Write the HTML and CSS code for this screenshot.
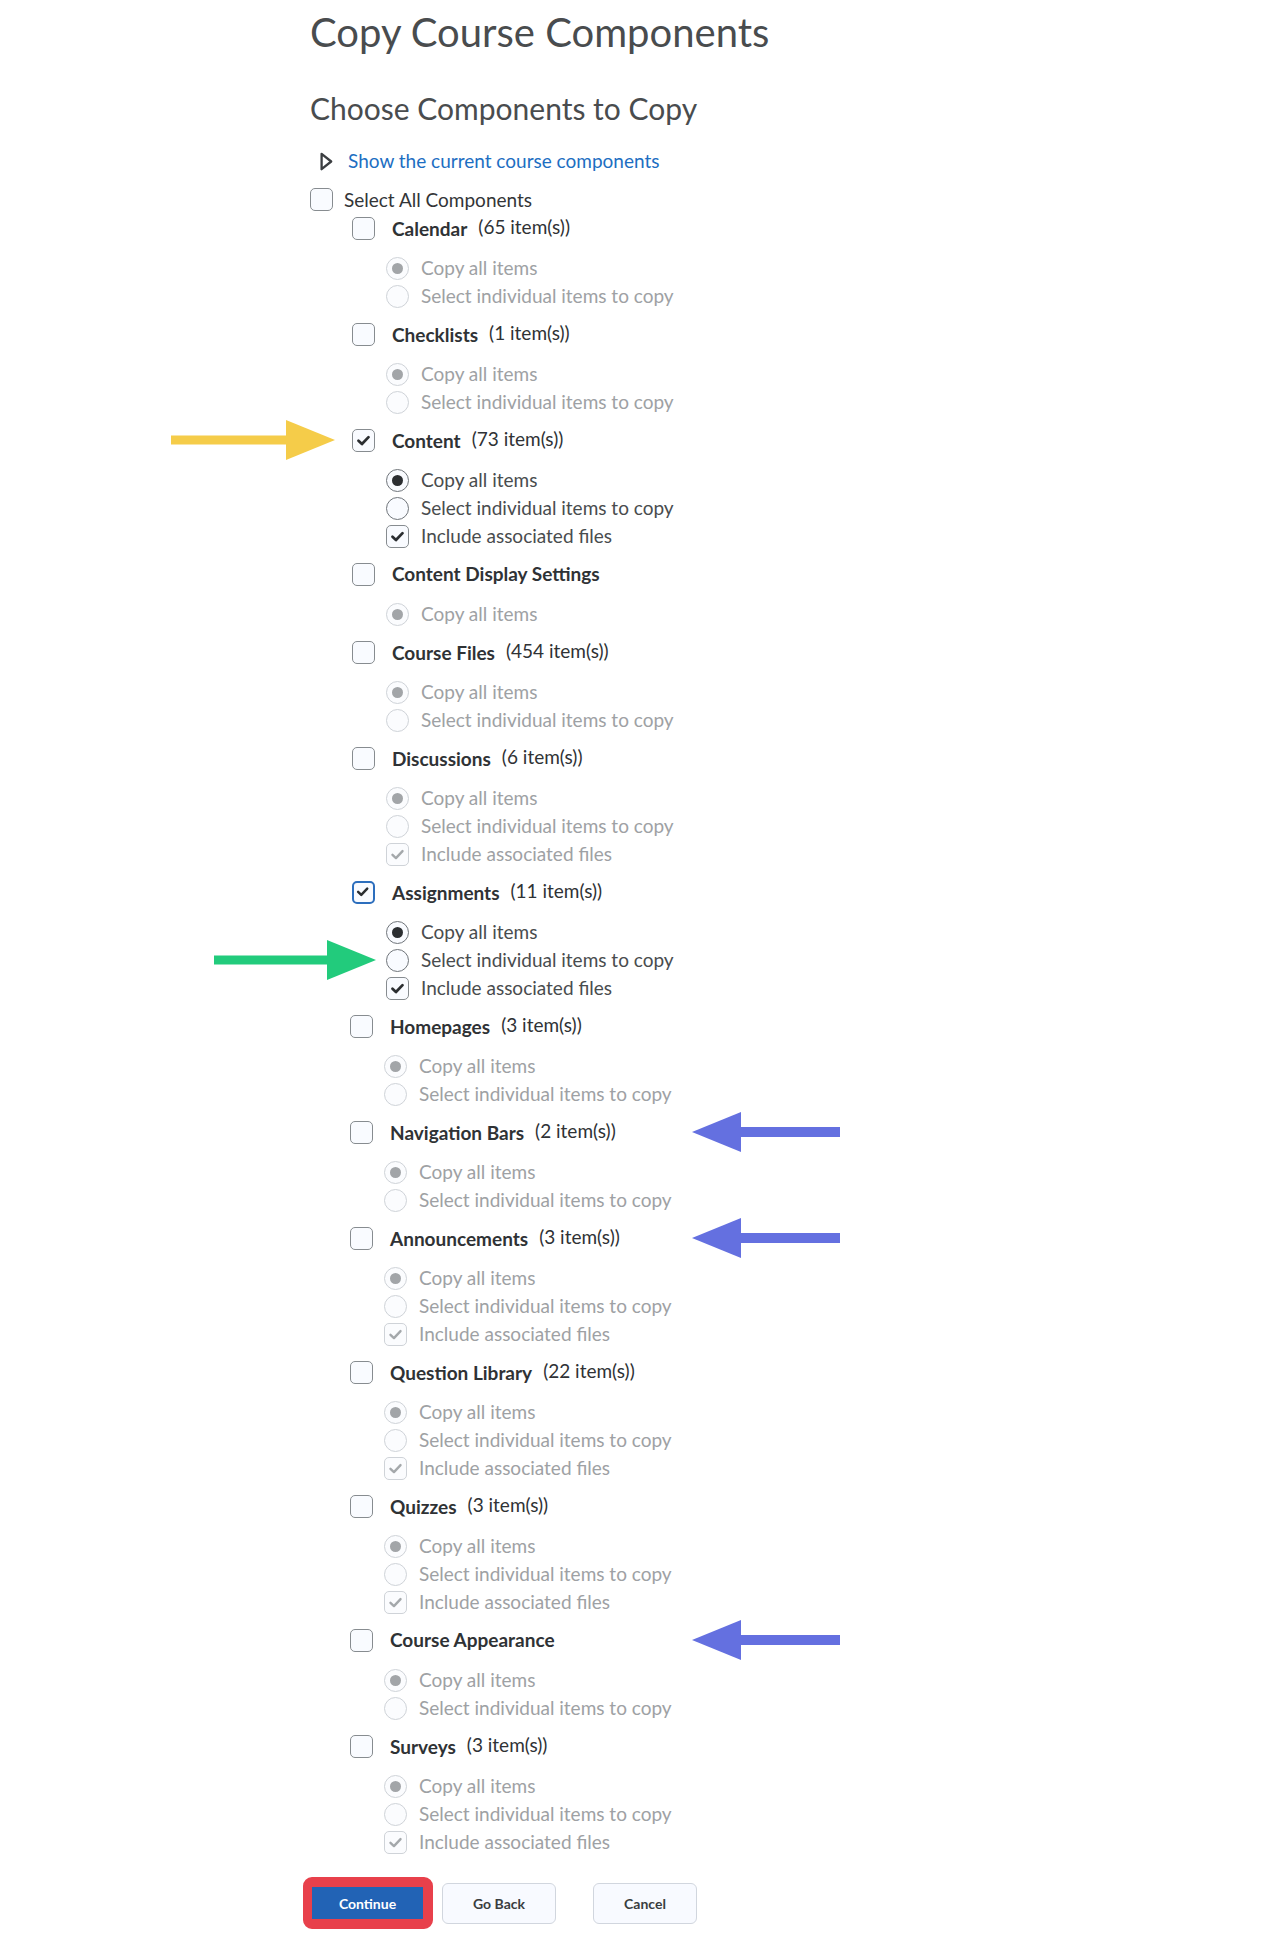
FILE: index.html
```html
<!DOCTYPE html>
<html lang="en">
<head>
<meta charset="utf-8">
<title>Copy Course Components</title>
<link rel="stylesheet" href="styles.css">
</head>
<body>
<main class="page">
  <h1 class="title">Copy Course Components</h1>
  <h2 class="subtitle">Choose Components to Copy</h2>

  <div class="toggle">
    <svg class="tri" width="13" height="19" viewBox="0 0 13 19"><path d="M1.6 1.8 L11.2 9.5 L1.6 17.2 Z" fill="none" stroke="#3b3e41" stroke-width="2.3" stroke-linejoin="round"/></svg>
    <a class="link" href="#">Show the current course components</a>
  </div>

  <label class="select-all"><span class="cb"></span><span>Select All Components</span></label>

  <ul class="components">
    <li class="comp">
      <div class="head"><span class="cb"></span><span class="lbl"><b class="name">Calendar</b><span class="count">(65 item(s))</span></span></div>
      <ul class="opts off">
        <li class="opt"><span class="radio on"></span>Copy all items</li>
        <li class="opt"><span class="radio"></span>Select individual items to copy</li>
      </ul>
    </li>
    <li class="comp">
      <div class="head"><span class="cb"></span><span class="lbl"><b class="name">Checklists</b><span class="count">(1 item(s))</span></span></div>
      <ul class="opts off">
        <li class="opt"><span class="radio on"></span>Copy all items</li>
        <li class="opt"><span class="radio"></span>Select individual items to copy</li>
      </ul>
    </li>
    <li class="comp">
      <div class="head">
        <svg class="arrow arrow-yellow" width="164" height="40" viewBox="0 0 164 40"><rect x="0" y="15.5" width="118" height="9" fill="#f5cc49"/><polygon points="115,0 164,20 115,40" fill="#f5cc49"/></svg>
        <span class="cb checked"><svg viewBox="0 0 23 23"><path d="M6 11.8 L9.8 15.4 L17 7.8" fill="none" stroke="#2b2e31" stroke-width="3" stroke-linecap="round" stroke-linejoin="round"/></svg></span><span class="lbl"><b class="name">Content</b><span class="count">(73 item(s))</span></span></div>
      <ul class="opts">
        <li class="opt"><span class="radio on"></span>Copy all items</li>
        <li class="opt"><span class="radio"></span>Select individual items to copy</li>
        <li class="opt"><span class="cb checked"><svg viewBox="0 0 23 23"><path d="M6 11.8 L9.8 15.4 L17 7.8" fill="none" stroke="#2b2e31" stroke-width="3" stroke-linecap="round" stroke-linejoin="round"/></svg></span>Include associated files</li>
      </ul>
    </li>
    <li class="comp">
      <div class="head"><span class="cb"></span><span class="lbl"><b class="name">Content Display Settings</b></span></div>
      <ul class="opts off">
        <li class="opt"><span class="radio on"></span>Copy all items</li>
      </ul>
    </li>
    <li class="comp">
      <div class="head"><span class="cb"></span><span class="lbl"><b class="name">Course Files</b><span class="count">(454 item(s))</span></span></div>
      <ul class="opts off">
        <li class="opt"><span class="radio on"></span>Copy all items</li>
        <li class="opt"><span class="radio"></span>Select individual items to copy</li>
      </ul>
    </li>
    <li class="comp">
      <div class="head"><span class="cb"></span><span class="lbl"><b class="name">Discussions</b><span class="count">(6 item(s))</span></span></div>
      <ul class="opts off">
        <li class="opt"><span class="radio on"></span>Copy all items</li>
        <li class="opt"><span class="radio"></span>Select individual items to copy</li>
        <li class="opt"><span class="cb checked"><svg viewBox="0 0 23 23"><path d="M6 11.8 L9.8 15.4 L17 7.8" fill="none" stroke="#a4a8ab" stroke-width="2.6" stroke-linecap="round" stroke-linejoin="round"/></svg></span>Include associated files</li>
      </ul>
    </li>
    <li class="comp">
      <div class="head"><span class="cb checked focus"><svg viewBox="0 0 23 23"><path d="M5 10.8 L8.8 14.4 L16 6.8" fill="none" stroke="#2b2e31" stroke-width="3" stroke-linecap="round" stroke-linejoin="round"/></svg></span><span class="lbl"><b class="name">Assignments</b><span class="count">(11 item(s))</span></span></div>
      <ul class="opts">
        <li class="opt"><span class="radio on"></span>Copy all items</li>
        <li class="opt">
          <svg class="arrow arrow-green" width="162" height="40" viewBox="0 0 162 40"><rect x="0" y="15.5" width="116" height="9" fill="#22cb7c"/><polygon points="113,0 162,20 113,40" fill="#22cb7c"/></svg>
          <span class="radio"></span>Select individual items to copy</li>
        <li class="opt"><span class="cb checked"><svg viewBox="0 0 23 23"><path d="M6 11.8 L9.8 15.4 L17 7.8" fill="none" stroke="#2b2e31" stroke-width="3" stroke-linecap="round" stroke-linejoin="round"/></svg></span>Include associated files</li>
      </ul>
    </li>
    <li class="comp shift">
      <div class="head"><span class="cb"></span><span class="lbl"><b class="name">Homepages</b><span class="count">(3 item(s))</span></span></div>
      <ul class="opts off">
        <li class="opt"><span class="radio on"></span>Copy all items</li>
        <li class="opt"><span class="radio"></span>Select individual items to copy</li>
      </ul>
    </li>
    <li class="comp shift">
      <div class="head">
        <svg class="arrow arrow-blue" width="148" height="40" viewBox="0 0 148 40"><polygon points="0,20 49,0 49,40" fill="#6470e0"/><rect x="47" y="15" width="101" height="10" fill="#6470e0"/></svg>
        <span class="cb"></span><span class="lbl"><b class="name">Navigation Bars</b><span class="count">(2 item(s))</span></span></div>
      <ul class="opts off">
        <li class="opt"><span class="radio on"></span>Copy all items</li>
        <li class="opt"><span class="radio"></span>Select individual items to copy</li>
      </ul>
    </li>
    <li class="comp shift">
      <div class="head">
        <svg class="arrow arrow-blue" width="148" height="40" viewBox="0 0 148 40"><polygon points="0,20 49,0 49,40" fill="#6470e0"/><rect x="47" y="15" width="101" height="10" fill="#6470e0"/></svg>
        <span class="cb"></span><span class="lbl"><b class="name">Announcements</b><span class="count">(3 item(s))</span></span></div>
      <ul class="opts off">
        <li class="opt"><span class="radio on"></span>Copy all items</li>
        <li class="opt"><span class="radio"></span>Select individual items to copy</li>
        <li class="opt"><span class="cb checked"><svg viewBox="0 0 23 23"><path d="M6 11.8 L9.8 15.4 L17 7.8" fill="none" stroke="#a4a8ab" stroke-width="2.6" stroke-linecap="round" stroke-linejoin="round"/></svg></span>Include associated files</li>
      </ul>
    </li>
    <li class="comp shift">
      <div class="head"><span class="cb"></span><span class="lbl"><b class="name">Question Library</b><span class="count">(22 item(s))</span></span></div>
      <ul class="opts off">
        <li class="opt"><span class="radio on"></span>Copy all items</li>
        <li class="opt"><span class="radio"></span>Select individual items to copy</li>
        <li class="opt"><span class="cb checked"><svg viewBox="0 0 23 23"><path d="M6 11.8 L9.8 15.4 L17 7.8" fill="none" stroke="#a4a8ab" stroke-width="2.6" stroke-linecap="round" stroke-linejoin="round"/></svg></span>Include associated files</li>
      </ul>
    </li>
    <li class="comp shift">
      <div class="head"><span class="cb"></span><span class="lbl"><b class="name">Quizzes</b><span class="count">(3 item(s))</span></span></div>
      <ul class="opts off">
        <li class="opt"><span class="radio on"></span>Copy all items</li>
        <li class="opt"><span class="radio"></span>Select individual items to copy</li>
        <li class="opt"><span class="cb checked"><svg viewBox="0 0 23 23"><path d="M6 11.8 L9.8 15.4 L17 7.8" fill="none" stroke="#a4a8ab" stroke-width="2.6" stroke-linecap="round" stroke-linejoin="round"/></svg></span>Include associated files</li>
      </ul>
    </li>
    <li class="comp shift">
      <div class="head">
        <svg class="arrow arrow-blue" width="148" height="40" viewBox="0 0 148 40"><polygon points="0,20 49,0 49,40" fill="#6470e0"/><rect x="47" y="15" width="101" height="10" fill="#6470e0"/></svg>
        <span class="cb"></span><span class="lbl"><b class="name">Course Appearance</b></span></div>
      <ul class="opts off">
        <li class="opt"><span class="radio on"></span>Copy all items</li>
        <li class="opt"><span class="radio"></span>Select individual items to copy</li>
      </ul>
    </li>
    <li class="comp shift">
      <div class="head"><span class="cb"></span><span class="lbl"><b class="name">Surveys</b><span class="count">(3 item(s))</span></span></div>
      <ul class="opts off">
        <li class="opt"><span class="radio on"></span>Copy all items</li>
        <li class="opt"><span class="radio"></span>Select individual items to copy</li>
        <li class="opt"><span class="cb checked"><svg viewBox="0 0 23 23"><path d="M6 11.8 L9.8 15.4 L17 7.8" fill="none" stroke="#a4a8ab" stroke-width="2.6" stroke-linecap="round" stroke-linejoin="round"/></svg></span>Include associated files</li>
      </ul>
    </li>
  </ul>

  <div class="buttons">
    <button class="btn btn-primary" type="button">Continue</button>
    <button class="btn btn-back" type="button">Go Back</button>
    <button class="btn btn-cancel" type="button">Cancel</button>
  </div>
</main>
</body>
</html>
```
FILE: styles.css
```css
* { box-sizing: border-box; }

html, body {
  margin: 0;
  padding: 0;
  background: #ffffff;
}

body {
  font-family: Lato, "Open Sans", "Liberation Sans", sans-serif;
  color: #494c4e;
}

.page {
  padding: 8px 0 0 310px;
}

.title {
  margin: 0;
  font-size: 40px;
  line-height: 48px;
  font-weight: 400;
  color: #494c4e;
}

.subtitle {
  margin: 34px 0 0;
  font-size: 30px;
  line-height: 36px;
  font-weight: 400;
  color: #494c4e;
}

.toggle {
  display: flex;
  align-items: center;
  height: 24px;
  margin-top: 23px;
  padding-left: 10px;
  gap: 15px;
}

.tri { display: block; }

.link {
  font-size: 19px;
  line-height: 24px;
  color: #1d6ec2;
  text-decoration: none;
}

.select-all {
  display: flex;
  align-items: center;
  gap: 11px;
  height: 23px;
  margin-top: 15px;
  font-size: 19px;
  line-height: 23px;
  color: #333537;
}

.cb {
  flex: none;
  display: inline-flex;
  align-items: center;
  justify-content: center;
  width: 23px;
  height: 23px;
  border: 1px solid #878c90;
  border-radius: 5px;
  background: #f9fbff;
}

.cb svg {
  width: 23px;
  height: 23px;
  display: block;
}

.cb.focus {
  border: 2px solid #2c6ebd;
}

.components {
  list-style: none;
  margin: 5px 0 0;
  padding: 0 0 0 42px;
}

.comp.shift {
  margin-left: -2px;
}

.head {
  position: relative;
  display: flex;
  align-items: center;
  height: 24px;
  gap: 17px;
}

.lbl {
  font-size: 19px;
  line-height: 24px;
  white-space: nowrap;
}

.name {
  font-weight: 700;
  color: #2f3235;
}

.count {
  margin-left: 11px;
  vertical-align: 2px;
  color: #2f3235;
}

.opts {
  list-style: none;
  margin: 14px 0 12px;
  padding: 0 0 0 34px;
}

.opt {
  position: relative;
  display: flex;
  align-items: center;
  gap: 12px;
  height: 28px;
  font-size: 19px;
  line-height: 28px;
  color: #494c4e;
  white-space: nowrap;
}

.radio {
  flex: none;
  position: relative;
  width: 23px;
  height: 23px;
  border: 1px solid #70757a;
  border-radius: 50%;
  background: #f9fbff;
}

.radio.on::after {
  content: "";
  position: absolute;
  left: 50%;
  top: 50%;
  width: 11px;
  height: 11px;
  margin: -5.5px 0 0 -5.5px;
  border-radius: 50%;
  background: #2b2e31;
}

.opts.off .opt {
  color: #9ea1a4;
}

.opts.off .radio,
.opts.off .cb {
  border-color: #cfd3d8;
  background: #fbfcfe;
}

.opts.off .radio.on::after {
  background: #a2a5a8;
}

.arrow {
  position: absolute;
  top: 50%;
  transform: translateY(-50%);
  display: block;
}

.arrow-yellow { left: -181px; }
.arrow-green { left: -172px; }
.arrow-blue { left: 342px; }

.buttons {
  display: flex;
  align-items: center;
  margin: 21px 0 0 -7px;
  padding-bottom: 16px;
}

.btn {
  font-family: Lato, "Open Sans", "Liberation Sans", sans-serif;
  font-size: 14px;
  font-weight: 700;
  cursor: pointer;
}

.btn-primary {
  width: 130px;
  height: 52px;
  border: 10px solid #e8404b;
  border-left-width: 9px;
  border-radius: 9px;
  background: #2263b5;
  color: #ffffff;
  padding: 0;
}

.btn-back,
.btn-cancel {
  height: 41px;
  border: 1px solid #d1d6de;
  border-radius: 6px;
  background: #f8faff;
  color: #3a3d40;
  padding: 0;
}

.btn-back {
  width: 114px;
  margin-left: 9px;
}

.btn-cancel {
  width: 104px;
  margin-left: 37px;
}
```
